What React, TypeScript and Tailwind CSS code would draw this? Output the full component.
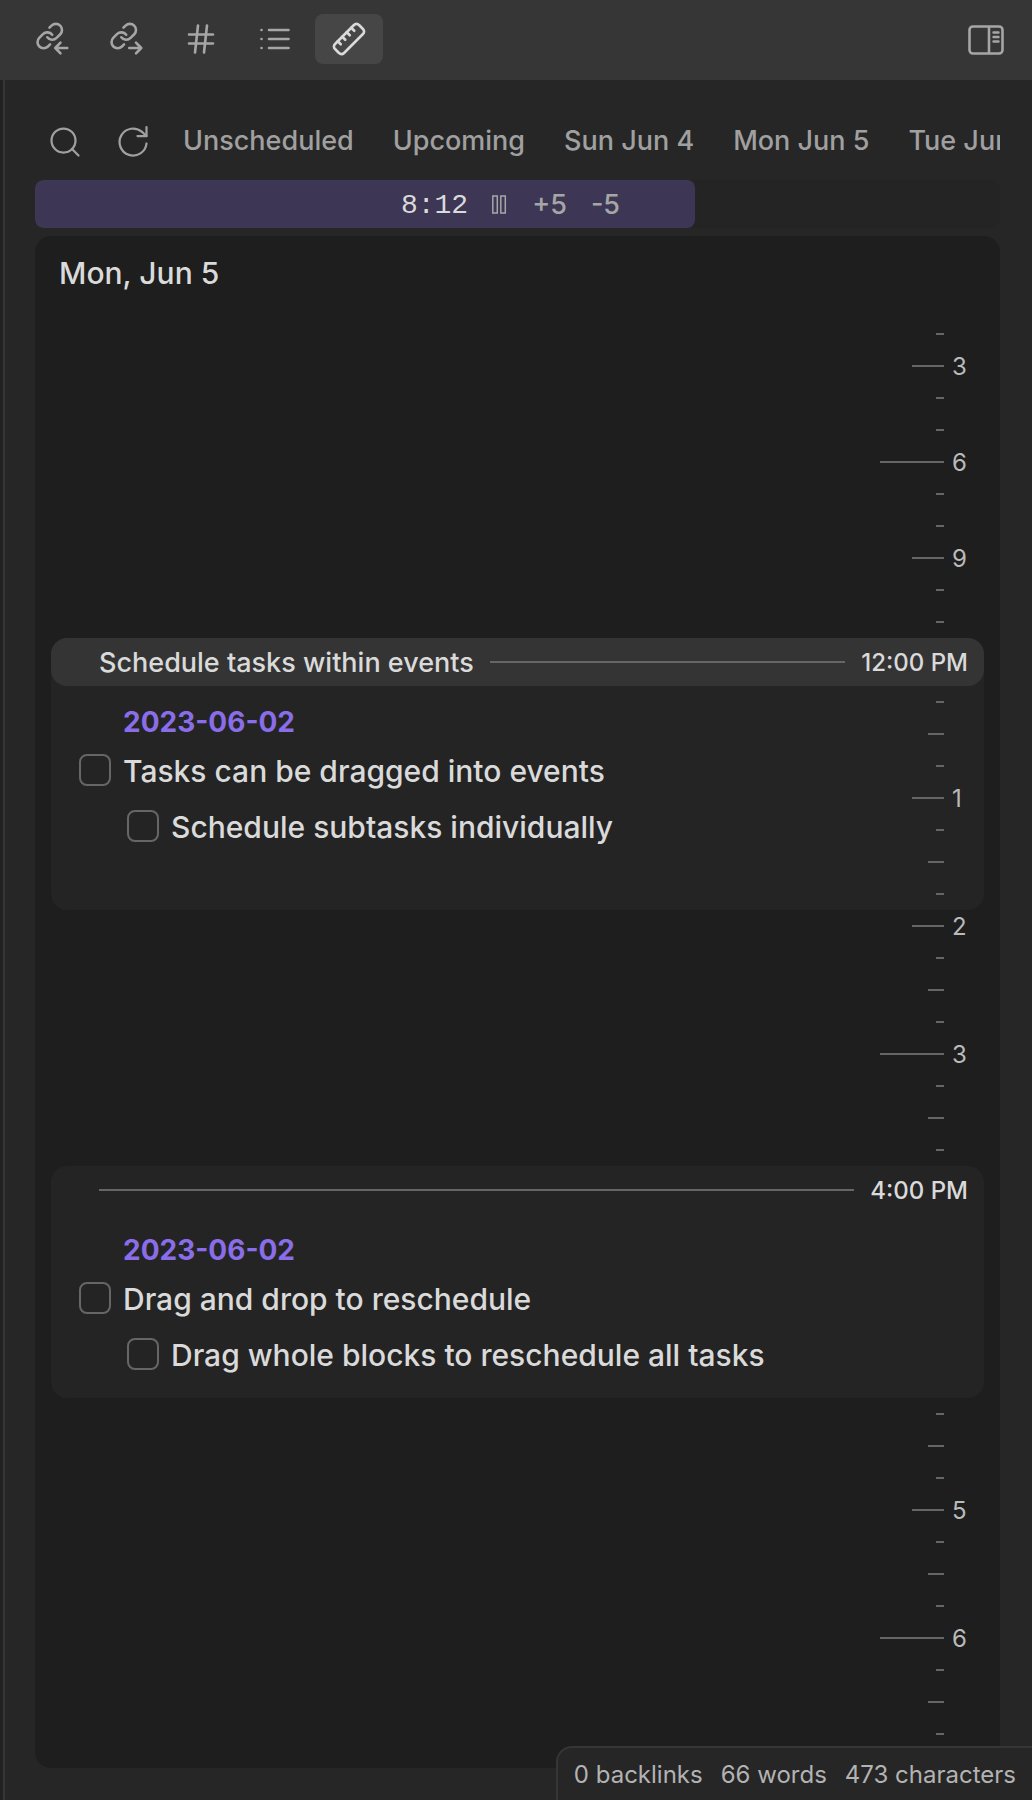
import type { ReactNode } from "react";

type TickSize = "xs" | "sm" | "md" | "lg";
type Tick = { size: TickSize; label?: string };

const tickWidths: Record<TickSize, string> = {
  xs: "w-2",
  sm: "w-4",
  md: "w-8",
  lg: "w-16",
};

const xs: Tick = { size: "xs" };
const sm: Tick = { size: "sm" };

const morning: Tick[] = [
  xs,
  { size: "md", label: "3" },
  xs,
  xs,
  { size: "lg", label: "6" },
  xs,
  xs,
  { size: "md", label: "9" },
  xs,
  xs,
];
const noon: Tick[] = [xs, sm, xs, { size: "md", label: "1" }, xs, sm, xs];
const afternoon: Tick[] = [
  { size: "md", label: "2" },
  xs,
  sm,
  xs,
  { size: "lg", label: "3" },
  xs,
  sm,
  xs,
];
const evening: Tick[] = [
  xs,
  sm,
  xs,
  { size: "md", label: "5" },
  xs,
  sm,
  xs,
  { size: "lg", label: "6" },
  xs,
  sm,
  xs,
];

function Ticks({ ticks }: { ticks: Tick[] }) {
  return (
    <div className="flex shrink-0 flex-col">
      {ticks.map((tick, i) => (
        <div key={i} className="flex h-8 items-center justify-end gap-2">
          <div className={`h-0.5 bg-[#666666] ${tickWidths[tick.size]}`} />
          <span className="w-8 pt-0.5 text-2xl leading-8 font-normal text-[#bababa]">{tick.label}</span>
        </div>
      ))}
    </div>
  );
}

function Icon({ children, stroke = 1.75 }: { children: ReactNode; stroke?: number }) {
  return (
    <svg
      className="size-9 shrink-0"
      viewBox="0 0 24 24"
      fill="none"
      stroke="currentColor"
      strokeWidth={stroke}
      strokeLinecap="round"
      strokeLinejoin="round"
      aria-hidden="true"
    >
      {children}
    </svg>
  );
}

function Chain() {
  return (
    <g transform="translate(0 0.2) scale(0.82)" strokeWidth="2.1">
      <path d="M10 13a5 5 0 0 0 7.54.54l3-3a5 5 0 0 0-7.07-7.07l-1.72 1.71" />
      <path d="M14 11a5 5 0 0 0-7.54-.54l-3 3a5 5 0 0 0 7.07 7.07l1.71-1.71" />
    </g>
  );
}

function ToolButton({ label, active, children }: { label: string; active?: boolean; children: ReactNode }) {
  return (
    <button
      type="button"
      aria-label={label}
      className={`flex h-[50px] w-[68px] items-center justify-center rounded-lg ${
        active ? "bg-[#464646] text-[#dadada]" : "text-[#a6a6a6]"
      }`}
    >
      {children}
    </button>
  );
}

function Toolbar() {
  return (
    <header className="flex h-20 items-start bg-[#363636] pt-3.5 pr-3 pl-[19px]">
      <div className="flex gap-1.5">
        <ToolButton label="Backlinks">
          <Icon>
            <Chain />
            <path d="M21.5 18h-8M17 14.4 13.5 18l3.5 3.6" />
          </Icon>
        </ToolButton>
        <ToolButton label="Outgoing links">
          <Icon>
            <Chain />
            <path d="M13.5 18h8M18 14.4l3.5 3.6-3.5 3.6" />
          </Icon>
        </ToolButton>
        <ToolButton label="Tags">
          <Icon>
            <path d="M4 9h16M4 15h16M10 3 8 21M16 3l-2 18" />
          </Icon>
        </ToolButton>
        <ToolButton label="Outline">
          <Icon>
            <path d="M8 6h13M8 12h13M8 18h13M3 6h.01M3 12h.01M3 18h.01" />
          </Icon>
        </ToolButton>
        <ToolButton label="Time ruler" active>
          <Icon>
            <path d="M21.3 8.7 8.7 21.3c-1 1-2.5 1-3.4 0l-2.6-2.6c-1-1-1-2.5 0-3.4L15.3 2.7c1-1 2.5-1 3.4 0l2.6 2.6c1 1 1 2.5 0 3.4Z" />
            <path d="m7.5 10.5 2 2M10.5 7.5l2 2M13.5 4.5l2 2M4.5 13.5l2 2" />
          </Icon>
        </ToolButton>
      </div>
      <button
        type="button"
        aria-label="Toggle sidebar"
        className="ml-auto flex h-[52px] w-[68px] items-center justify-center text-[#a6a6a6]"
      >
        <svg className="h-[30px] w-9" viewBox="0 0 36 30" fill="none" stroke="currentColor" strokeLinecap="round" aria-hidden="true">
          <rect x="1.5" y="1.5" width="33" height="27" rx="3.5" strokeWidth="2.6" />
          <path d="M21 2v26" strokeWidth="2.6" />
          <path d="M25.5 7.5h5M25.5 12h5M25.5 16.5h5" strokeWidth="2.4" />
        </svg>
      </button>
    </header>
  );
}

function DateNav() {
  return (
    <nav className="mb-5 flex h-9 items-start gap-8 overflow-hidden pl-3 text-[27px] leading-8 text-[#a0a0a0]">
      <button type="button" aria-label="Search" className="shrink-0">
        <Icon stroke={1.5}>
          <circle cx="11" cy="11" r="8" />
          <path d="m21 21-4.3-4.3" />
        </Icon>
      </button>
      <button type="button" aria-label="Refresh" className="shrink-0">
        <Icon stroke={1.5}>
          <path d="M21 2v6h-6" />
          <path d="M21 13a9 9 0 1 1-3-7.7L21 8" />
        </Icon>
      </button>
      <div className="flex shrink-0 gap-[39px] pt-px whitespace-nowrap">
        {["Unscheduled", "Upcoming", "Sun Jun 4", "Mon Jun 5", "Tue Jun 6"].map((day) => (
          <button type="button" key={day}>
            {day}
          </button>
        ))}
      </div>
    </nav>
  );
}

function Timer() {
  return (
    <div className="relative mb-2 h-12 overflow-hidden rounded-lg bg-[#242424]">
      <div className="absolute inset-y-0 left-0 rounded-lg bg-[#3d3654]" style={{ width: "68.4%" }} />
      <div className="relative flex h-full items-center justify-center gap-6 pt-0.5 pr-3.5 text-[27px] leading-8 text-[#a6a6a6]">
        <span className="pt-0.5 font-['Liberation_Mono',monospace] text-[28px] text-[#dadada]">8:12</span>
        <button type="button" aria-label="Pause">
          <svg className="h-5 w-4" viewBox="0 0 16 20" fill="none" stroke="currentColor" strokeWidth="1.5" aria-hidden="true">
            <rect x="0.8" y="1" width="4.5" height="17" />
            <rect x="8.8" y="1" width="4.5" height="17" />
          </svg>
        </button>
        <button type="button">+5</button>
        <button type="button">-5</button>
      </div>
    </div>
  );
}

function Task({ text, nested }: { text: string; nested?: boolean }) {
  return (
    <label className={`flex h-14 items-center gap-3 ${nested ? "pl-[76px]" : "pl-7"}`}>
      <input type="checkbox" className="size-8 shrink-0 appearance-none rounded-lg border-2 border-[#666666]" />
      <span className="pt-px text-3xl leading-10">{text}</span>
    </label>
  );
}

type EventProps = {
  title?: string;
  time: string;
  date: string;
  task: string;
  subtask: string;
  ticks?: Tick[];
};

function EventBlock({ title, time, date, task, subtask, ticks }: EventProps) {
  return (
    <section className="rounded-2xl bg-[#242424]">
      <div className={`flex h-12 items-center gap-4 rounded-2xl pr-4 pl-12 ${title ? "bg-[#343434]" : ""}`}>
        {title && <h3 className="pt-0.5 text-[27px] leading-8">{title}</h3>}
        <div className="h-0.5 grow bg-[#666666]" />
        <span className="pt-0.5 text-2xl leading-8">{time}</span>
      </div>
      <div className="flex">
        <div className="min-w-0 grow pt-4 pb-4">
          <a href="#note" className="block pl-[72px] text-[28px] leading-10 font-bold text-[#8a6de8]">
            {date}
          </a>
          <Task text={task} />
          <Task text={subtask} nested />
        </div>
        {ticks && <Ticks ticks={ticks} />}
      </div>
    </section>
  );
}

export default function App() {
  return (
    <div className="relative flex min-h-screen flex-col bg-[#262626] font-['Inter',sans-serif] font-medium text-[#dadada]">
      <Toolbar />
      <div className="flex grow bg-[#222222] pl-[3px]">
        <main className="min-w-0 grow border-l-2 border-[#363636] bg-[#262626] pt-11 pr-8 pb-8 pl-[30px]">
          <DateNav />
          <Timer />
          <div className="rounded-2xl bg-[#1e1e1e] px-4 pt-[13px] pb-[18px]">
            <h2 className="mb-[21px] pl-2 text-3xl leading-12">Mon, Jun 5</h2>
            <Ticks ticks={morning} />
            <EventBlock
              title="Schedule tasks within events"
              time="12:00 PM"
              date="2023-06-02"
              task="Tasks can be dragged into events"
              subtask="Schedule subtasks individually"
              ticks={noon}
            />
            <Ticks ticks={afternoon} />
            <EventBlock
              time="4:00 PM"
              date="2023-06-02"
              task="Drag and drop to reschedule"
              subtask="Drag whole blocks to reschedule all tasks"
            />
            <Ticks ticks={evening} />
          </div>
        </main>
      </div>
      <footer className="absolute right-0 bottom-0 flex gap-[18px] rounded-tl-2xl border-t-2 border-l-2 border-[#363636] bg-[#262626] px-4 pt-[11px] pb-[9px] text-2xl leading-8 font-normal text-[#b3b3b3]">
        <span>0 backlinks</span>
        <span>66 words</span>
        <span>473 characters</span>
      </footer>
    </div>
  );
}
